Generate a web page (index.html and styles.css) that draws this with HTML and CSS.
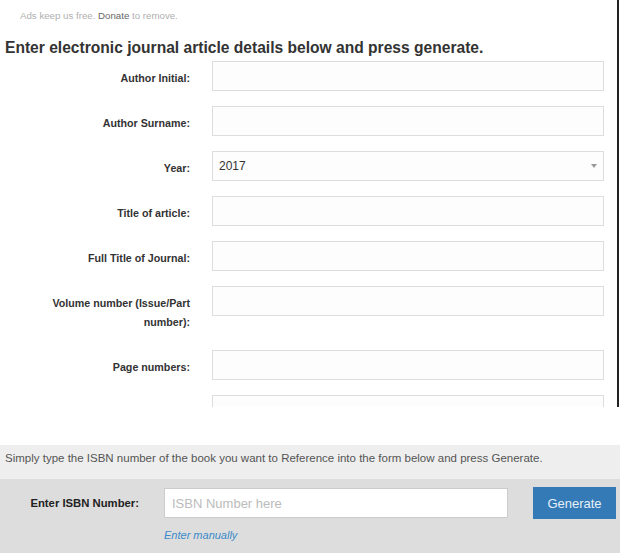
FILE: index.html
```html
<!DOCTYPE html>
<html>
<head>
<meta charset="utf-8">
<link rel="stylesheet" href="styles.css">
</head>
<body>
<div class="top">
  <p class="ads">Ads keep us free. <span class="donate">Donate</span> to remove.</p>
  <h1 class="title">Enter electronic journal article details below and press generate.</h1>
  <div class="form">
    <label class="lbl">Author Initial:</label>
    <div class="field"></div>
    <label class="lbl">Author Surname:</label>
    <div class="field"></div>
    <label class="lbl">Year:</label>
    <div class="field select"><span>2017</span><span class="caret"></span></div>
    <label class="lbl">Title of article:</label>
    <div class="field"></div>
    <label class="lbl">Full Title of Journal:</label>
    <div class="field"></div>
    <label class="lbl lbl-tall">Volume number (Issue/Part number):</label>
    <div class="field"></div>
    <label class="lbl">Page numbers:</label>
    <div class="field"></div>
    <label class="lbl"></label>
    <div class="field"></div>
  </div>
</div>
<div class="gap"></div>
<div class="info">Simply type the ISBN number of the book you want to Reference into the form below and press Generate.</div>
<div class="isbn">
  <label class="isbn-lbl">Enter ISBN Number:</label>
  <div class="isbn-input">ISBN Number here</div>
  <div class="btn">Generate</div>
  <a class="manual">Enter manually</a>
</div>
</body>
</html>
```
FILE: styles.css
```css
html, body {
  margin: 0;
  padding: 0;
  background: #fff;
  font-family: "Liberation Sans", Arial, Helvetica, sans-serif;
  color: #333;
}
.top {
  width: 617px;
  height: 407px;
  border-right: 2px solid #222;
  overflow: hidden;
}
.ads {
  margin: 0;
  padding: 10px 0 0 20px;
  font-size: 9.7px;
  line-height: 11px;
  color: #b0b0b0;
}
.donate { color: #666; }
.title {
  margin: 18px 0 0 5px;
  font-size: 15.6px;
  line-height: 18px;
  font-weight: bold;
  color: #333;
}
.form {
  margin-top: 4px;
  display: grid;
  grid-template-columns: 190px 392px;
  column-gap: 22px;
  row-gap: 15px;
  align-items: start;
}
.lbl {
  text-align: right;
  font-size: 10.7px;
  font-weight: bold;
  line-height: 19px;
  padding-top: 8px;
  color: #333;
}
.lbl-tall { padding-left: 30px; padding-bottom: 3px; }
.field {
  height: 28px;
  border: 1px solid #ddd;
  background: #fdfdfd;
  box-sizing: content-box;
}
.select {
  display: flex;
  align-items: center;
  justify-content: space-between;
  padding: 0 6px 0 6px;
  height: 28px;
  font-size: 12px;
  color: #333;
}
.caret {
  width: 0;
  height: 0;
  border-left: 3px solid transparent;
  border-right: 3px solid transparent;
  border-top: 4px solid #999;
}
.gap { height: 38px; }
.info {
  background: #eee;
  height: 34px;
  box-sizing: border-box;
  padding: 6px 0 0 5px;
  font-size: 11.5px;
  line-height: 14px;
  color: #555;
}
.isbn {
  background: #ddd;
  height: 74px;
  display: grid;
  grid-template-columns: 139px 344px 83px;
  column-gap: 25px;
  align-items: center;
  align-content: start;
  padding-top: 8px;
  box-sizing: border-box;
}
.isbn-lbl {
  text-align: right;
  font-size: 11.3px;
  font-weight: bold;
  color: #222;
}
.isbn-input {
  height: 30px;
  box-sizing: border-box;
  border: 1px solid #ccc;
  background: #fff;
  font-size: 13px;
  color: #bbb;
  display: flex;
  align-items: center;
  padding-left: 7px;
}
.btn {
  height: 32px;
  background: #337ab7;
  color: #e8f0f8;
  font-size: 13px;
  display: flex;
  align-items: center;
  justify-content: center;
}
.manual {
  grid-column: 2;
  font-size: 11px;
  font-style: italic;
  color: #3b8ac9;
  line-height: 12px;
  margin-top: 10px;
}
```
